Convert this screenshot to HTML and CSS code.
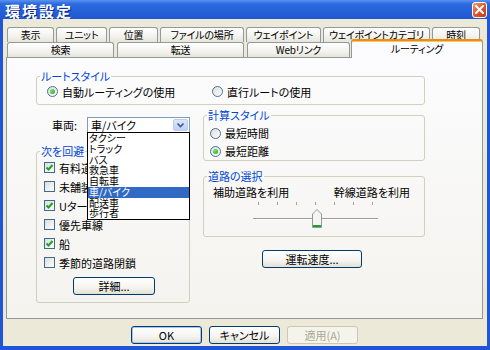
FILE: index.html
```html
<!DOCTYPE html>
<html lang="ja">
<head>
    <meta charset="UTF-8">
    <title>環境設定</title>
    <link rel="stylesheet" href="styles.css">
</head>
<body>
<div class="window">
    <div class="titlebar">
        <span class="title">環境設定</span>
        <span class="close-btn">
            <svg width="9" height="9" viewBox="0 0 9 9"><path d="M1 1 L8 8 M8 1 L1 8" stroke="#fff" stroke-width="2" stroke-linecap="square"/></svg>
        </span>
    </div>

    <div class="frame">
        <div class="tabs tabs-back">
            <div class="tab">表示</div>
            <div class="tab">ユニット</div>
            <div class="tab">位置</div>
            <div class="tab">ファイルの場所</div>
            <div class="tab">ウェイポイント</div>
            <div class="tab">ウェイポイントカテゴリ</div>
            <div class="tab">時刻</div>
        </div>
        <div class="tabs tabs-front">
            <div class="tab">検索</div>
            <div class="tab">転送</div>
            <div class="tab">Webリンク</div>
            <div class="tab active">ルーティング</div>
        </div>

        <div class="panel">
            <fieldset class="group route-group">
                <legend>ルートスタイル</legend>
                <div class="route-body">
                    <div class="radio on"><span class="radio-mark"></span>自動ルーティングの使用</div>
                    <div class="radio"><span class="radio-mark"></span>直行ルートの使用</div>
                </div>
            </fieldset>

            <div class="columns">
                <div class="col-left">
                    <div class="vehicle-row">
                        <span class="vehicle-label">車両:</span>
                        <div class="combo">
                            <span class="combo-value">車/バイク</span>
                            <span class="combo-btn">
                                <svg width="7" height="5" viewBox="0 0 7 5"><path d="M0.5 0.5 L3.5 3.5 L6.5 0.5" fill="none" stroke="#4d6185" stroke-width="1.6"/></svg>
                            </span>
                            <ul class="combo-list">
                                <li>タクシー</li>
                                <li>トラック</li>
                                <li>バス</li>
                                <li>救急車</li>
                                <li>自転車</li>
                                <li class="selected">車/バイク</li>
                                <li>配送車</li>
                                <li>歩行者</li>
                            </ul>
                        </div>
                    </div>

                    <fieldset class="group avoid-group">
                        <legend>次を回避</legend>
                        <div class="avoid-body">
                            <div class="check on"><span class="check-box"><svg width="9" height="9" viewBox="0 0 9 9"><path d="M1.5 4.5 L3.5 6.5 L7.5 2" fill="none" stroke="#21a121" stroke-width="2"/></svg></span>有料道路</div>
                            <div class="check"><span class="check-box"></span>未舗装道路</div>
                            <div class="check on"><span class="check-box"><svg width="9" height="9" viewBox="0 0 9 9"><path d="M1.5 4.5 L3.5 6.5 L7.5 2" fill="none" stroke="#21a121" stroke-width="2"/></svg></span>Uターン</div>
                            <div class="check"><span class="check-box"></span>優先車線</div>
                            <div class="check on"><span class="check-box"><svg width="9" height="9" viewBox="0 0 9 9"><path d="M1.5 4.5 L3.5 6.5 L7.5 2" fill="none" stroke="#21a121" stroke-width="2"/></svg></span>船</div>
                            <div class="check"><span class="check-box"></span>季節的道路閉鎖</div>
                            <button class="btn detail-btn">詳細...</button>
                        </div>
                    </fieldset>
                </div>

                <div class="col-right">
                    <fieldset class="group calc-group">
                        <legend>計算スタイル</legend>
                        <div class="calc-body">
                            <div class="radio"><span class="radio-mark"></span>最短時間</div>
                            <div class="radio on"><span class="radio-mark"></span>最短距離</div>
                        </div>
                    </fieldset>

                    <fieldset class="group road-group">
                        <legend>道路の選択</legend>
                        <div class="road-body">
                            <div class="road-labels">
                                <span>補助道路を利用</span>
                                <span>幹線道路を利用</span>
                            </div>
                            <div class="ticks">
                                <span></span><span></span><span></span><span></span><span></span><span></span><span></span>
                            </div>
                            <div class="slider">
                                <div class="slider-track"></div>
                                <svg class="slider-thumb" width="10" height="19" viewBox="0 0 10 19">
                                    <path d="M0.5 5 L5 0.5 L9.5 5 L9.5 18.5 L0.5 18.5 Z" fill="#f6f5f0" stroke="#8c9aa8"/>
                                    <path d="M1 17 L9 17" stroke="#21a121" stroke-width="2"/>
                                </svg>
                            </div>
                        </div>
                    </fieldset>

                    <button class="btn speed-btn">運転速度...</button>
                </div>
            </div>
        </div>

        <div class="dialog-buttons">
            <button class="btn default">OK</button>
            <button class="btn">キャンセル</button>
            <button class="btn disabled">適用(A)</button>
        </div>
    </div>
</div>
</body>
</html>
```

FILE: styles.css
```css
* {
    box-sizing: border-box;
}

body {
    margin: 0;
    font-family: "Noto Sans CJK JP", "Noto Sans", sans-serif;
    font-size: 11px;
    font-feature-settings: "palt";
    color: #000;
    background: #1f56d8;
}

.window {
    width: 490px;
    height: 350px;
    display: flex;
    flex-direction: column;
}

.titlebar {
    height: 19px;
    flex: none;
    display: flex;
    align-items: flex-end;
    justify-content: space-between;
    padding: 0 3px 0 5px;
    background: linear-gradient(#5b93ef 0%, #2c6ae0 20%, #2560d9 60%, #1f58d0 100%);
}

.title {
    color: #fff;
    font-weight: bold;
    font-size: 15px;
    line-height: 15px;
    margin-bottom: 1px;
    letter-spacing: 2px;
    font-feature-settings: normal;
    text-shadow: 1px 1px 0 #0a2a8a;
}

.close-btn {
    align-self: center;
    width: 15px;
    height: 16px;
    display: flex;
    align-items: center;
    justify-content: center;
    border: 1px solid #fff;
    border-radius: 3px;
    background: linear-gradient(135deg, #f0a080, #e05a30 45%, #c83a14);
}

.frame {
    flex: 1;
    background: #ece9d8;
    border: solid #1f56d8;
    border-width: 0 3px 4px 3px;
    padding: 8px 4px 0 3px;
}

/* tabs */
.tabs {
    display: grid;
    height: 15px;
    margin-left: 1px;
}

.tabs-back {
    grid-template-columns: 47px 51px 49px 84px 75px 107px 48px;
    column-gap: 2px;
}

.tabs-front {
    grid-template-columns: 107px 127px 103px 128px;
    column-gap: 3px;
}

.tab {
    border: 1px solid #919b9c;
    border-bottom: none;
    border-radius: 3px 3px 0 0;
    background: linear-gradient(#ffffff, #f3f2ed 60%, #e6e4da);
    text-align: center;
    font-size: 10px;
    letter-spacing: -0.2px;
    line-height: 14px;
    white-space: nowrap;
    overflow: hidden;
}

.tab.active {
    position: relative;
    z-index: 1;
    margin: -3px -2px -1px -2px;
    border-top: 2px solid #e68b2c;
    background: #fcfcfe;
    box-shadow: inset 0 1px 0 #ffc73c;
    line-height: 16px;
}

/* panel */
.panel {
    height: 262px;
    border: 1px solid #919b9c;
    background: linear-gradient(#fcfcfe, #f4f3ee);
    padding: 12px 0 0 29px;
}

.group {
    margin: 0;
    padding: 0;
    min-width: 0;
    border: 1px solid #d0d0bf;
    border-radius: 3px;
}

.group legend {
    margin-left: 3px;
    padding: 0 1px;
    color: #0046d5;
    line-height: 12px;
}

.route-group {
    width: 389px;
}

.route-body {
    display: grid;
    grid-template-columns: 165px auto;
    padding: 2px 0 5px 10px;
}

.radio,
.check {
    display: flex;
    align-items: center;
    gap: 4px;
    white-space: nowrap;
}

.route-body .radio {
    height: 15px;
}

.radio-mark {
    flex: none;
    width: 11px;
    height: 11px;
    border: 1px solid #4d6f95;
    border-radius: 50%;
    background: linear-gradient(135deg, #dcdcd7, #ffffff);
    display: flex;
    align-items: center;
    justify-content: center;
}

.radio.on .radio-mark::after {
    content: "";
    width: 5px;
    height: 5px;
    border-radius: 50%;
    background: radial-gradient(circle at 35% 35%, #6de86a, #21a121);
}

.check-box {
    flex: none;
    width: 11px;
    height: 11px;
    border: 1px solid #3d6a96;
    background: linear-gradient(135deg, #dcdcd7, #ffffff);
    display: flex;
    align-items: center;
    justify-content: center;
}

.columns {
    display: grid;
    grid-template-columns: 154px 222px;
    column-gap: 13px;
}

/* left column */
.col-left {
    padding-top: 12px;
}

.vehicle-row {
    display: flex;
    align-items: center;
    height: 16px;
}

.vehicle-label {
    margin-left: 16px;
    width: 28px;
}

.combo {
    position: relative;
    margin-left: 7px;
    width: 103px;
    height: 16px;
    border: 1px solid #7f9db9;
    background: #fff;
    display: flex;
    align-items: center;
    justify-content: space-between;
    padding: 0 1px 0 3px;
}

.combo-btn {
    width: 15px;
    height: 12px;
    border: 1px solid #b9cdf5;
    border-radius: 2px;
    background: linear-gradient(#dbe6fd, #bdd0fa);
    display: flex;
    align-items: center;
    justify-content: center;
}

.combo-list {
    position: absolute;
    z-index: 2;
    top: 100%;
    left: -1px;
    width: 103px;
    margin: 0;
    padding: 0;
    list-style: none;
    background: #fff;
    border: 1px solid #000;
    font-size: 10px;
}

.combo-list li {
    height: 10.75px;
    line-height: 10.75px;
    padding-left: 1px;
    white-space: nowrap;
}

.combo-list li.selected {
    background: #316ac5;
    color: #fff;
}

.avoid-group {
    margin-top: 12px;
}

.avoid-body {
    padding: 1px 0 7px 7px;
}

.avoid-body .check {
    height: 19px;
}

.detail-btn {
    margin: 5px 0 0 29px;
    width: 82px;
}

/* right column */
.col-right {
    padding-top: 4px;
}

.calc-body {
    padding: 3px 0 0 6px;
}

.calc-body .radio {
    height: 18px;
}

.road-group {
    margin-top: 9px;
}

.road-body {
    padding: 4px 14px 7px 9px;
}

.road-labels {
    display: flex;
    justify-content: space-between;
    line-height: 12px;
}

.ticks {
    display: flex;
    justify-content: space-between;
    width: 115px;
    height: 3px;
    margin: 4px 0 0 45px;
}

.ticks span {
    width: 1px;
    background: #a5a49f;
}

.slider {
    position: relative;
    width: 125px;
    height: 24px;
    margin-left: 40px;
}

.slider-track {
    position: absolute;
    left: 0;
    right: 0;
    top: 13px;
    height: 2px;
    border-top: 1px solid #9d9c99;
    border-bottom: 1px solid #fff;
}

.slider-thumb {
    position: absolute;
    left: 59px;
    top: 4px;
}

.speed-btn {
    margin: 13px 0 0 59px;
    width: 100px;
}

/* buttons */
.btn {
    font: inherit;
    font-feature-settings: "palt";
    height: 18px;
    padding: 0;
    line-height: 16px;
    color: #000;
    border: 1px solid #003c74;
    border-radius: 3px;
    background: linear-gradient(#ffffff, #f5f4ef 60%, #e3e0d4);
}

.btn.default {
    box-shadow: inset 0 0 0 1px #a9c4f0;
}

.btn.disabled {
    color: #aca899;
    border-color: #c9c7ba;
    background: #f5f4ea;
}

.dialog-buttons {
    display: flex;
    justify-content: center;
    gap: 7px;
    margin-top: 7px;
}

.dialog-buttons .btn {
    width: 71px;
}
```
